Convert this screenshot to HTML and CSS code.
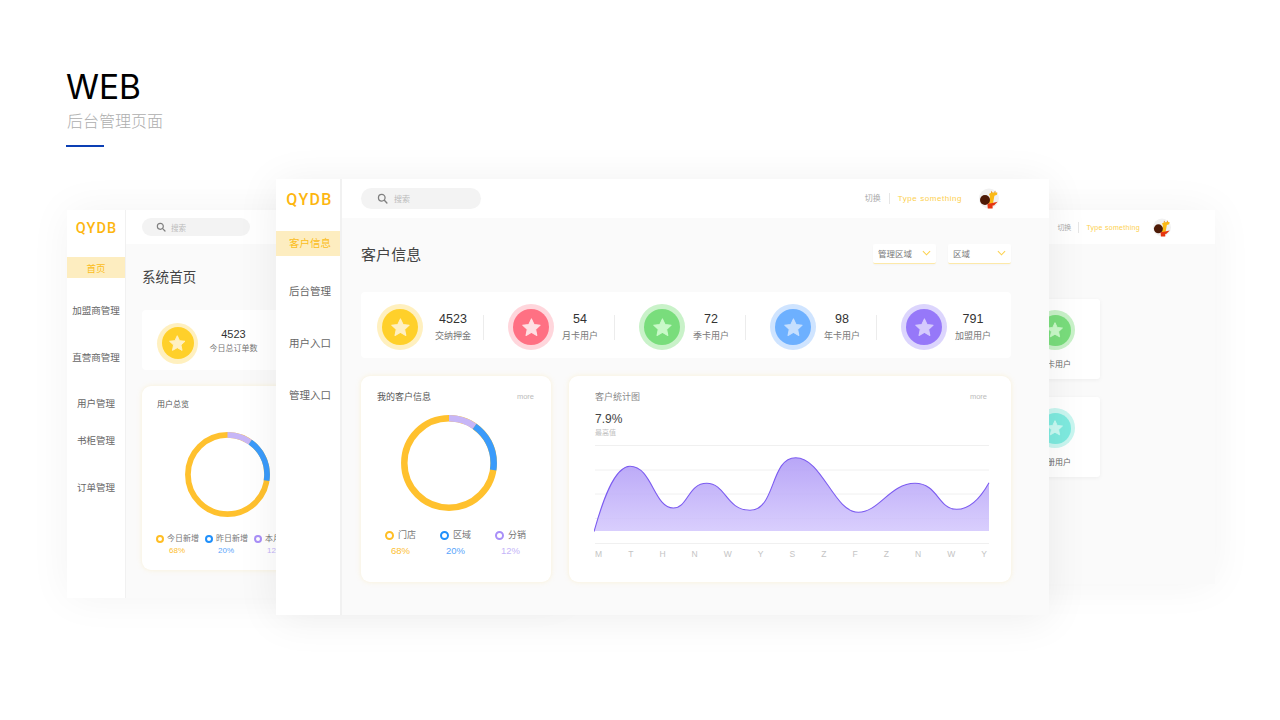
FILE: index.html
```html
<!DOCTYPE html>
<html lang="zh">
<head>
<meta charset="utf-8">
<title>WEB 后台管理页面</title>
<link rel="stylesheet" href="styles.css">
</head>
<body>
<svg class="defs" width="0" height="0" aria-hidden="true">
  <symbol id="star" viewBox="0 0 24 24"><polygon points="12,2.2 15,8.6 22,9.4 16.8,14.2 18.2,21.2 12,17.7 5.8,21.2 7.2,14.2 2,9.4 9,8.6" fill="currentColor" stroke="currentColor" stroke-width="1.2" stroke-linejoin="round"/></symbol>
  <symbol id="search" viewBox="0 0 12 12"><circle cx="5.2" cy="5.2" r="3.6" fill="none" stroke="#7f7f7f" stroke-width="1.4"/><line x1="8" y1="8" x2="10.8" y2="10.8" stroke="#7f7f7f" stroke-width="1.5" stroke-linecap="round"/></symbol>
  <symbol id="avatar" viewBox="0 0 20 21">
    <circle cx="10" cy="10.5" r="10" fill="#f1f1f1"/>
    <path d="M10 6 L12.4 4.6 L18.4 4.4 L18 6.8 L15.4 7.8 L14 15.4 L9.6 16 L11 8.4 Z" fill="#fbb914"/>
    <path d="M12.2 2.8 L13.6 4.8 L12 4.8 Z M16.2 2.4 L16.6 4.6 L15 4.6 Z" fill="#e8890c"/>
    <circle cx="6" cy="12" r="5" fill="#4d1a06"/>
    <path d="M8.4 15.8 L13.4 15 L18.6 13.8 L15 17.4 L13.6 17.6 L13.6 20.6 L8.8 20.6 Z" fill="#e5350f"/>
  </symbol>
  <linearGradient id="areaFill" x1="0" y1="0" x2="0" y2="1"><stop offset="0" stop-color="#af9af6"/><stop offset="1" stop-color="#d4c8fd"/></linearGradient>
</svg>

<main class="page">
  <header class="intro">
    <h1 class="intro-title">WEB</h1>
    <p class="intro-sub">后台管理页面</p>
    <div class="intro-rule"></div>
  </header>

  <!-- right background window -->
  <section class="window window-right">
    <div class="topbar topbar-sm">
      <div class="top-actions top-actions-sm">
        <span class="switch">切换</span><span class="type">Type something</span>
        <svg class="avatar avatar-sm"><use href="#avatar"/></svg>
      </div>
    </div>
    <div class="right-body">
      <div class="mini-card">
        <div class="badge badge-r green"><span class="disc"><svg class="star"><use href="#star"/></svg></span></div>
        <span class="mini-label">季卡用户</span>
      </div>
      <div class="mini-card">
        <div class="badge badge-r teal"><span class="disc"><svg class="star"><use href="#star"/></svg></span></div>
        <span class="mini-label">注册用户</span>
      </div>
    </div>
  </section>

  <!-- left background window -->
  <section class="window window-left">
    <aside class="side side-sm">
      <div class="logo logo-sm">QYDB</div>
      <nav class="menu menu-left">
        <a class="item active">首页</a>
        <a class="item">加盟商管理</a>
        <a class="item">直营商管理</a>
        <a class="item">用户管理</a>
        <a class="item">书柜管理</a>
        <a class="item">订单管理</a>
      </nav>
    </aside>
    <div class="column">
      <div class="topbar topbar-sm">
        <div class="search search-sm"><svg class="search-ico"><use href="#search"/></svg><span>搜索</span></div>
      </div>
      <div class="left-body">
        <h2 class="title title-sm">系统首页</h2>
        <div class="stats stats-left">
          <div class="badge badge-m yellow"><span class="disc"><svg class="star"><use href="#star"/></svg></span></div>
          <div class="stat-text stat-text-left"><b>4523</b><span>今日总订单数</span></div>
        </div>
        <div class="card card-left">
          <div class="card-title card-title-sm">用户总览</div>
          <svg class="donut donut-left" viewBox="0 0 96 96">
            <circle class="ring r-yellow" cx="48" cy="48" r="44.7"/>
            <circle class="ring r-purple" cx="48" cy="48" r="44.7" pathLength="360" stroke-dasharray="35 325" transform="rotate(-90 48 48)"/>
            <circle class="ring r-blue" cx="48" cy="48" r="44.7" pathLength="360" stroke-dasharray="64 296" stroke-dashoffset="-35" transform="rotate(-90 48 48)"/>
          </svg>
          <div class="legend legend-left">
            <div class="leg"><div class="leg-top"><i class="dot d-yellow"></i>今日新增</div><div class="leg-val v-yellow">68%</div></div>
            <div class="leg"><div class="leg-top"><i class="dot d-blue"></i>昨日新增</div><div class="leg-val v-blue">20%</div></div>
            <div class="leg"><div class="leg-top"><i class="dot d-purple"></i>本月新增</div><div class="leg-val v-purple">12%</div></div>
          </div>
        </div>
      </div>
    </div>
  </section>

  <!-- main window -->
  <section class="window window-main">
    <aside class="side">
      <div class="logo">QYDB</div>
      <nav class="menu menu-main">
        <a class="item active">客户信息</a>
        <a class="item">后台管理</a>
        <a class="item">用户入口</a>
        <a class="item">管理入口</a>
      </nav>
    </aside>
    <div class="column">
      <div class="topbar">
        <div class="search"><svg class="search-ico"><use href="#search"/></svg><span>搜索</span></div>
        <div class="top-actions">
          <span class="switch">切换</span><span class="type">Type something</span>
          <svg class="avatar"><use href="#avatar"/></svg>
        </div>
      </div>
      <div class="body">
        <div class="head">
          <h2 class="title">客户信息</h2>
          <div class="selects">
            <div class="select"><span>管理区域</span><svg class="chev" viewBox="0 0 10 6"><polyline points="1,1 5,5 9,1"/></svg></div>
            <div class="select select-b"><span>区域</span><svg class="chev" viewBox="0 0 10 6"><polyline points="1,1 5,5 9,1"/></svg></div>
          </div>
        </div>

        <div class="stats">
          <div class="stat">
            <div class="badge yellow"><span class="disc"><svg class="star"><use href="#star"/></svg></span></div>
            <div class="stat-text"><b>4523</b><span>交纳押金</span></div><i class="vline"></i>
          </div>
          <div class="stat">
            <div class="badge pink"><span class="disc"><svg class="star"><use href="#star"/></svg></span></div>
            <div class="stat-text"><b>54</b><span>月卡用户</span></div><i class="vline"></i>
          </div>
          <div class="stat">
            <div class="badge green"><span class="disc"><svg class="star"><use href="#star"/></svg></span></div>
            <div class="stat-text"><b>72</b><span>季卡用户</span></div><i class="vline"></i>
          </div>
          <div class="stat">
            <div class="badge blue"><span class="disc"><svg class="star"><use href="#star"/></svg></span></div>
            <div class="stat-text"><b>98</b><span>年卡用户</span></div><i class="vline"></i>
          </div>
          <div class="stat">
            <div class="badge purple"><span class="disc"><svg class="star"><use href="#star"/></svg></span></div>
            <div class="stat-text"><b>791</b><span>加盟用户</span></div>
          </div>
        </div>

        <div class="panels">
          <div class="card card-donut">
            <div class="card-head"><span class="card-title">我的客户信息</span><span class="more">more</span></div>
            <svg class="donut" viewBox="0 0 96 96">
              <circle class="ring r-yellow" cx="48" cy="48" r="44.7"/>
              <circle class="ring r-purple" cx="48" cy="48" r="44.7" pathLength="360" stroke-dasharray="35 325" transform="rotate(-90 48 48)"/>
              <circle class="ring r-blue" cx="48" cy="48" r="44.7" pathLength="360" stroke-dasharray="64 296" stroke-dashoffset="-35" transform="rotate(-90 48 48)"/>
            </svg>
            <div class="legend">
              <div class="leg"><div class="leg-top"><i class="dot d-yellow"></i>门店</div><div class="leg-val v-yellow">68%</div></div>
              <div class="leg"><div class="leg-top"><i class="dot d-blue"></i>区域</div><div class="leg-val v-blue">20%</div></div>
              <div class="leg"><div class="leg-top"><i class="dot d-purple"></i>分销</div><div class="leg-val v-purple">12%</div></div>
            </div>
          </div>
          <div class="card card-chart">
            <div class="card-head"><span class="card-title card-title-soft">客户统计图</span><span class="more">more</span></div>
            <div class="peak">7.9%</div>
            <div class="peak-label">最高值</div>
            <svg class="chart" viewBox="0 0 396 100">
              <g class="grid">
                <line x1="1" y1="0.5" x2="395" y2="0.5"/>
                <line x1="1" y1="25" x2="395" y2="25"/>
                <line x1="1" y1="49" x2="395" y2="49"/>
                <line x1="1" y1="73.5" x2="395" y2="73.5"/>
                <line x1="1" y1="98.5" x2="395" y2="98.5"/>
              </g>
              <path class="area" d="M0 86.7 C8 58 20 21.3 36 21.3 C58 21.3 60 63 79.3 63 C94 63 94 38.3 112.7 38.3 C132 38.3 132 65.3 156 65.3 C182 65.3 176 12.7 201.7 12.7 C228 12.7 240 67.3 264.3 67.3 C285 67.3 296 38.3 321 38.3 C344 38.3 344 64.3 362.7 64.3 C376 64.3 387 52 395 37.7 V86 H0 Z"/>
              <path class="curve" d="M0 86.7 C8 58 20 21.3 36 21.3 C58 21.3 60 63 79.3 63 C94 63 94 38.3 112.7 38.3 C132 38.3 132 65.3 156 65.3 C182 65.3 176 12.7 201.7 12.7 C228 12.7 240 67.3 264.3 67.3 C285 67.3 296 38.3 321 38.3 C344 38.3 344 64.3 362.7 64.3 C376 64.3 387 52 395 37.7"/>
            </svg>
            <div class="ticks"><span>M</span><span>T</span><span>H</span><span>N</span><span>W</span><span>Y</span><span>S</span><span>Z</span><span>F</span><span>Z</span><span>N</span><span>W</span><span>Y</span></div>
          </div>
        </div>
      </div>
    </div>
  </section>
</main>
</body>
</html>
```
FILE: styles.css
```css
* { box-sizing: border-box; }
html, body { margin: 0; padding: 0; }
body {
  width: 1280px; height: 720px; overflow: hidden; background: #fff;
  font-family: "Liberation Sans", "Noto Sans CJK SC", sans-serif;
  color: #555;
}
.defs { position: absolute; }
.page { position: relative; width: 1280px; height: 720px; overflow: hidden; }

/* intro */
.intro { padding: 68px 0 0 66px; }
.intro-title { margin: 0; font: 400 33.5px/38px "Inter", "Liberation Sans", sans-serif; color: #000; letter-spacing: -0.1px; }
.intro-sub { margin: 4px 0 0 1px; font-size: 16px; line-height: 20px; color: #aeaeae; font-family: "Noto Sans CJK SC", sans-serif; font-weight: 300; }
.intro-rule { width: 38px; height: 2px; margin: 15px 0 0 0; background: #0c3fb4; }

/* windows on canvas */
.window { position: absolute; display: flex; background: #fafafa; box-shadow: 0 0 40px rgba(0,0,0,.05); overflow: hidden; }
.window-main { left: 276px; top: 179px; width: 773px; height: 436px; box-shadow: 0 4px 40px rgba(0,0,0,.07); }
.window-left { left: 67px; top: 210px; width: 500px; height: 388px; }
.window-right { left: 700px; top: 210px; width: 515px; height: 374px; flex-direction: column; }

/* sidebar */
.side { width: 66px; flex: none; background: #fff; border-right: 2px solid #f1f1f1; }
.side-sm { width: 59px; border-right-width: 1px; }
.logo { margin-top: 12px; padding-left: 3px; text-align: center; font: 500 16px/17px "Roboto", sans-serif; letter-spacing: 1.3px; color: #fdb60f; }
.logo-sm { font-size: 14.5px; line-height: 15px; letter-spacing: 1.1px; margin-top: 11px; padding-left: 1px; }
.menu { display: flex; flex-direction: column; }
.item { display: flex; align-items: center; justify-content: center; color: #666; white-space: nowrap; }
.item.active { background: #fdedc0; color: #fbbd1c; }
.menu-main { margin-top: 23px; }
.menu-main .item { height: 25px; padding: 0 0 2px 4px; font-size: 10.5px; margin-bottom: 27px; }
.menu-main .item.active { margin-bottom: 23px; }
.menu-left { margin-top: 21px; }
.menu-left .item { height: 20px; font-size: 9.5px; }
.menu-left .item.active { height: 21px; margin-bottom: 22px; }
.menu-left .item:nth-child(2) { margin-bottom: 27px; }
.menu-left .item:nth-child(3) { margin-bottom: 26px; }
.menu-left .item:nth-child(4) { margin-bottom: 17px; }
.menu-left .item:nth-child(5) { margin-bottom: 27px; }

.column { flex: 1; min-width: 0; display: flex; flex-direction: column; }

/* topbar */
.topbar { height: 39px; flex: none; display: flex; align-items: center; background: #fff; padding: 0 50px 0 19px; }
.topbar-sm { height: 34px; padding: 0 44px 0 16px; }
.search { width: 120px; height: 21px; border-radius: 11px; background: #f3f3f3; display: flex; align-items: center; padding-left: 16px; font-size: 8px; color: #bbb; font-family: "Noto Sans CJK SC", sans-serif; }
.search-sm { width: 108px; height: 18px; padding-left: 14px; font-size: 7.5px; }
.search-ico { width: 11px; height: 11px; margin-right: 6px; flex: none; }
.search-sm .search-ico { width: 10px; height: 10px; margin-right: 5px; }
.top-actions { margin-left: auto; display: flex; align-items: center; font-size: 8px; }
.switch { color: #aaa; padding-right: 8px; margin-right: 8px; border-right: 1px solid #e6e6e6; line-height: 11px; }
.type { color: #fdd04f; letter-spacing: .55px; }
.avatar { width: 20px; height: 21px; margin-left: 17px; display: block; }
.top-actions-sm { font-size: 7px; }
.top-actions-sm .switch { padding-right: 7px; margin-right: 7px; }
.top-actions-sm .type { letter-spacing: .3px; }
.avatar-sm { width: 18px; height: 19px; margin-left: 13px; }

/* main body */
.body { padding: 25px 38px 0 19px; }
.head { display: flex; align-items: center; justify-content: space-between; height: 20px; }
.title { margin: 0; font-size: 15px; font-weight: 400; color: #444; letter-spacing: .1px; }
.selects { display: flex; gap: 12px; margin-top: 2px; }
.select { width: 63px; height: 20px; background: #fff; border-bottom: 1px solid #fde9a8; border-radius: 2px; box-shadow: 0 1px 2px rgba(0,0,0,.03); display: flex; align-items: center; justify-content: space-between; padding: 0 5px 2px; font-size: 8.5px; color: #777; }
.chev { width: 9px; height: 6px; fill: none; stroke: #fcd24f; stroke-width: 1.2; }

/* stats */
.stats { margin-top: 29px; height: 66px; padding-top: 4px; background: #fff; border-radius: 4px; display: flex; align-items: center; }
.stat { width: 131px; flex: none; display: flex; align-items: center; padding-left: 16px; }
.badge { width: 46px; height: 46px; flex: none; border-radius: 50%; display: flex; align-items: center; justify-content: center; background: var(--ring); color: var(--star); }
.disc { width: 36px; height: 36px; border-radius: 50%; background: var(--disc); display: flex; align-items: center; justify-content: center; }
.star { width: 58%; height: 58%; display: block; }
.badge-m { width: 41px; height: 41px; }
.badge-m .disc { width: 32px; height: 32px; }
.badge-r { width: 40px; height: 40px; }
.badge-r .disc { width: 31px; height: 31px; }
.yellow { --ring: #fff0bf; --disc: #ffd02a; --star: #fff0c2; }
.pink { --ring: #ffd6dc; --disc: #ff7083; --star: #ffe0e4; }
.green { --ring: #c9f2c9; --disc: #79dd7c; --star: #c9f9c9; }
.blue { --ring: #cfe4ff; --disc: #6db0ff; --star: #c6dffe; }
.purple { --ring: #dcd5fd; --disc: #9678f9; --star: #d5cafd; }
.teal { --ring: #c9f6f0; --disc: #7eeadf; --star: #c9f9f2; }
.stat-text { width: 36px; margin-left: 12px; display: flex; flex-direction: column; align-items: center; white-space: nowrap; }
.stat:not(:first-child) .stat-text { margin-left: 8px; }
.stat-text b { font-weight: 400; font-size: 12.5px; line-height: 15px; color: #333; }
.stat-text span { font-size: 9px; line-height: 13px; margin-top: 3px; color: #777; }
.vline { width: 1px; height: 25px; margin-left: 12px; background: #ececec; }
.stat:not(:first-child) .vline { margin-left: 16px; }

/* panels */
.panels { margin-top: 18px; display: grid; grid-template-columns: 190px 442px; gap: 18px; height: 206px; }
.card { background: #fff; border-radius: 9px; box-shadow: 0 0 5px rgba(253,225,150,.35); }
.card-donut { padding: 14px 17px 0 16px; }
.card-head { display: flex; justify-content: space-between; align-items: center; height: 12px; }
.card-title { font-size: 9px; color: #555; }
.card-title-soft { color: #888; }
.more { font-size: 7.5px; color: #bbb; }
.donut { display: block; width: 96px; height: 96px; margin: 13px 0 0 24px; }
.ring { fill: none; stroke-width: 6.5; }
.r-yellow { stroke: #ffc12e; }
.r-blue { stroke: #3a9bfb; }
.r-purple { stroke: #c7b6f7; }
.legend { display: grid; grid-template-columns: 55px 55px 55px; margin: 18px 0 0 8px; }
.leg { width: 31px; display: flex; flex-direction: column; align-items: center; white-space: nowrap; }
.leg-top { display: flex; align-items: center; font-size: 9px; line-height: 12px; color: #777; align-self: flex-start; }
.dot { width: 9px; height: 9px; border-radius: 50%; border: 2px solid; margin-right: 4px; flex: none; }
.d-yellow { border-color: #ffbe24; }
.d-blue { border-color: #2090fb; }
.d-purple { border-color: #a98ff8; }
.leg-val { font-size: 9.5px; line-height: 12px; margin-top: 4px; }
.v-yellow { color: #fdc02f; }
.v-blue { color: #5aa6fb; }
.v-purple { color: #c5b5f8; }

/* chart */
.card-chart { padding: 14px 23px 0 25px; }
.card-chart .card-head { padding-left: 1px; padding-right: 1px; }
.peak { margin: 9px 0 0 0; padding-left: 1px; font-size: 12px; line-height: 16px; color: #444; }
.peak-label { padding-left: 1px; font-size: 7px; line-height: 10px; margin-top: 1px; color: #c2c2c2; }
.chart { display: block; width: 396px; height: 100px; margin-top: 7px; }
.grid line { stroke: #f0f0f0; stroke-width: 1; }
.area { fill: url(#areaFill); fill-opacity: .88; }
.curve { fill: none; stroke: #7c5cf0; stroke-width: 1.1; }
.ticks { display: flex; justify-content: space-between; padding: 0 1px; margin-top: 4px; font-size: 8.5px; line-height: 10px; color: #c4c4c4; }

/* left window body */
.left-body { padding: 24px 0 0 16px; width: 430px; }
.title-sm { font-size: 13.5px; line-height: 20px; letter-spacing: .1px; }
.stats-left { margin-top: 22px; height: 60px; padding: 6px 0 0 15px; justify-content: flex-start; }
.stat-text-left { width: 47px; margin: -5px 0 0 12px; }
.stat-text-left b { font-size: 11px; line-height: 13px; }
.stat-text-left span { font-size: 8px; line-height: 11px; margin-top: 2px; }
.card-left { margin-top: 16px; height: 184px; padding: 13px 0 0 15px; }
.card-title-sm { font-size: 8px; line-height: 11px; color: #555; }
.donut-left { width: 85px; height: 85px; margin: 22px 0 0 28px; }
.legend-left { grid-template-columns: 49px 49px 49px; margin: 17px 0 0 -1px; }
.legend-left .leg { width: 42px; }
.legend-left .leg-top { font-size: 8px; line-height: 10px; }
.legend-left .dot { width: 8px; height: 8px; margin-right: 3px; }
.legend-left .leg-val { font-size: 8px; line-height: 10px; margin-top: 2px; }

/* right window body */
.right-body { padding: 55px 115px 0 0; display: flex; flex-direction: column; align-items: flex-end; gap: 18px; }
.mini-card { width: 90px; height: 80px; background: #fff; border-radius: 3px; box-shadow: 0 1px 4px rgba(0,0,0,.05); padding-top: 11px; display: flex; flex-direction: column; align-items: center; }
.mini-label { font-size: 8px; line-height: 11px; margin-top: 9px; color: #666; }
```
